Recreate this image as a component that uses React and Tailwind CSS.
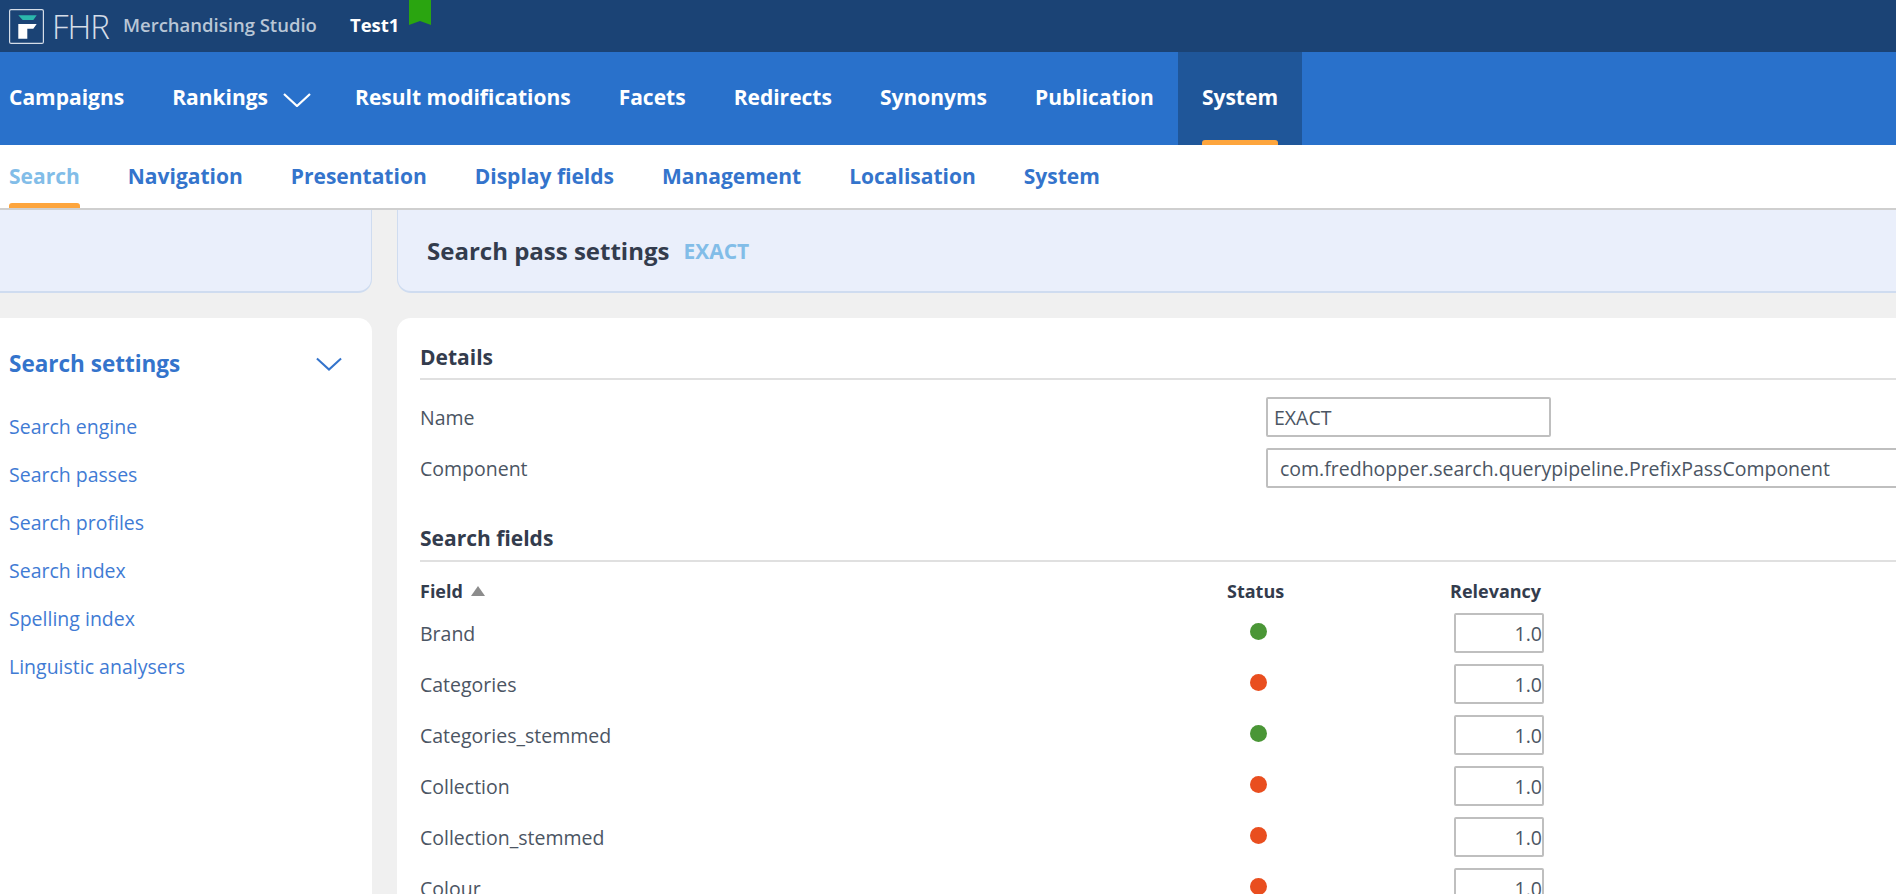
const mainNav = ["Result modifications", "Facets", "Redirects", "Synonyms", "Publication"]
const subNav = ["Navigation", "Presentation", "Display fields", "Management", "Localisation", "System"]
const links = ["Search engine", "Search passes", "Search profiles", "Search index", "Spelling index", "Linguistic analysers"]
const fields = [
  { name: "Brand", on: true },
  { name: "Categories", on: false },
  { name: "Categories_stemmed", on: true },
  { name: "Collection", on: false },
  { name: "Collection_stemmed", on: false },
  { name: "Colour", on: false },
]

function Chevron({ className }) {
  return (
    <svg viewBox="0 0 28 14" fill="none" stroke="currentColor" strokeWidth="2.2" className={className}>
      <polyline points="1,1 14,13 27,1" />
    </svg>
  )
}

function Logo() {
  return (
    <div className="flex items-center">
      <svg viewBox="0 0 35 35" className="w-[35px] h-[35px] shrink-0">
        <rect x="0.6" y="0.6" width="33.8" height="33.8" rx="1.5" fill="none" stroke="#d5dde8" strokeWidth="1.2" />
        <polygon points="9.3,6.3 27.7,6.3 24.3,11 13.7,11" fill="#2bb8ac" />
        <polygon points="9.3,15 27.7,15 24.3,19.7 18.3,19.7 18.3,29.7 9.3,29.7" fill="#ffffff" />
      </svg>
      <span className="ml-[8px] text-[33px] leading-none font-light text-[#d5dde8] tracking-[-1px]">FHR</span>
    </div>
  )
}

function SectionHead({ children, className }) {
  return (
    <div className={`h-[44px] flex items-center border-b-2 border-[#e0e0e0] text-[21px] font-bold text-[#333c4d] ${className}`}>
      {children}
    </div>
  )
}

function FormRow({ label, value, inputClass, className }) {
  return (
    <div className={`flex items-center h-[40px] ${className}`}>
      <span className="w-[846px] shrink-0 pt-[2px] text-[19.5px] text-[#4b5563]">{label}</span>
      <input
        readOnly
        value={value}
        className={`h-[40px] shrink-0 border-2 border-[#bfbfbf] rounded-[2px] text-[19.5px] text-[#4b5563] outline-none ${inputClass}`}
      />
    </div>
  )
}

export default function App() {
  return (
    <div className="h-screen w-full overflow-hidden flex flex-col bg-[#f0f0f0] font-['Open_Sans',sans-serif]">
      {/* Top bar */}
      <header className="h-[52px] shrink-0 bg-[#1b4375] flex items-center pl-[9px]">
        <Logo />
        <span className="ml-[14px] pb-[2px] text-[18.5px] font-semibold text-[#b9c6d6]">Merchandising Studio</span>
        <span className="ml-[33px] pb-[2px] text-[18.5px] font-bold text-white">Test1</span>
        <svg viewBox="0 0 22 25" className="w-[22px] h-[25px] ml-[10px] self-start">
          <polygon points="0,0 22,0 22,25 11,21 0,25" fill="#2aa510" />
        </svg>
      </header>

      {/* Main nav */}
      <nav className="h-[94px] shrink-0 bg-[#2971cb] border-b border-white flex items-stretch pl-[9px] text-[21px] font-bold text-white">
        <a className="flex items-center pb-[2px] pr-[24px]">Campaigns</a>
        <a className="flex items-center pb-[2px] pl-[24px] pr-[20px]">
          Rankings
          <Chevron className="w-[28px] h-[14px] ml-[15px] mt-[4px]" />
        </a>
        {mainNav.map((item) => (
          <a key={item} className="flex items-center pb-[2px] px-[24px]">{item}</a>
        ))}
        <a className="relative flex items-center pb-[2px] px-[24px] bg-[#1f5699]">
          System
          <span className="absolute left-[24px] right-[24px] bottom-0 h-[5px] rounded-t-[3px] bg-[#fda53d]" />
        </a>
      </nav>

      {/* Sub nav */}
      <div className="h-[64px] shrink-0 bg-white border-b-2 border-[#cfcfcf] flex items-stretch gap-[48px] pl-[9px] pb-[1px] text-[21px] font-bold text-[#3474cc]">
        <a className="relative flex items-center text-[#82bde8]">
          Search
          <span className="absolute left-0 right-0 bottom-[-1px] h-[5px] rounded-t-[3px] bg-[#fda53d]" />
        </a>
        {subNav.map((item) => (
          <a key={item} className="flex items-center">{item}</a>
        ))}
      </div>

      {/* Page header panels */}
      <div className="h-[83px] shrink-0 flex gap-[25px]">
        <div className="w-[372px] shrink-0 bg-[#eaeffb] rounded-br-[14px] border-b-2 border-r border-[#cfdcf0]" />
        <div className="flex-1 flex items-center pt-[1px] pl-[29px] bg-[#eaeffb] rounded-bl-[14px] border-b-2 border-l border-[#cfdcf0]">
          <span className="text-[24px] font-bold text-[#333c4d]">Search pass settings</span>
          <span className="ml-[14px] mt-[2px] text-[21px] font-bold text-[#82bde8]">EXACT</span>
        </div>
      </div>

      {/* Content */}
      <div className="flex-1 min-h-0 flex gap-[25px] mt-[25px]">
        <aside className="w-[372px] shrink-0 bg-white rounded-tr-[14px] pl-[9px] pt-[28px]">
          <div className="h-[36px] flex items-center justify-between pr-[30px]">
            <span className="text-[22.5px] font-bold text-[#3474cc]">Search settings</span>
            <Chevron className="w-[26px] h-[14px] text-[#3474cc]" />
          </div>
          <ul className="mt-[21px] text-[19.5px] text-[#3f7bd4]">
            {links.map((item) => (
              <li key={item} className="h-[48px] leading-[48px]">{item}</li>
            ))}
          </ul>
        </aside>

        <main className="flex-1 min-w-0 overflow-hidden bg-white rounded-tl-[14px] pl-[23px] pt-[18px]">
          <SectionHead className="pt-[2px]">Details</SectionHead>
          <FormRow label="Name" value="EXACT" className="mt-[17px]" inputClass="w-[285px] pl-[6px]" />
          <FormRow label="Component" value="com.fredhopper.search.querypipeline.PrefixPassComponent" className="mt-[11px]" inputClass="w-[700px] pl-[12px]" />

          <SectionHead className="mt-[30px]">Search fields</SectionHead>
          <div className="h-[51px] pt-[7px] flex items-center text-[18px] font-bold text-[#333c4d]">
            <span className="w-[807px] shrink-0 flex items-center">
              Field
              <svg viewBox="0 0 14 10" className="w-[14px] h-[10px] ml-[8px]"><polygon points="7,0 14,10 0,10" fill="#8c8c8c" /></svg>
            </span>
            <span className="w-[223px] shrink-0">Status</span>
            <span>Relevancy</span>
          </div>
          {fields.map((f) => (
            <div key={f.name} className="h-[51px] flex items-start text-[19.5px] text-[#4b5563]">
              <span className="w-[830px] shrink-0 leading-[42px]">{f.name}</span>
              <span className={`w-[17px] h-[17px] mt-[10px] rounded-full shrink-0 ${f.on ? "bg-[#4a9636]" : "bg-[#e94e1f]"}`} />
              <input
                readOnly
                value="1.0"
                className="ml-[187px] w-[90px] h-[40px] shrink-0 border-2 border-[#bfbfbf] rounded-[2px] text-right text-[19.5px] text-[#4b5563] outline-none"
              />
            </div>
          ))}
        </main>
      </div>
    </div>
  )
}
